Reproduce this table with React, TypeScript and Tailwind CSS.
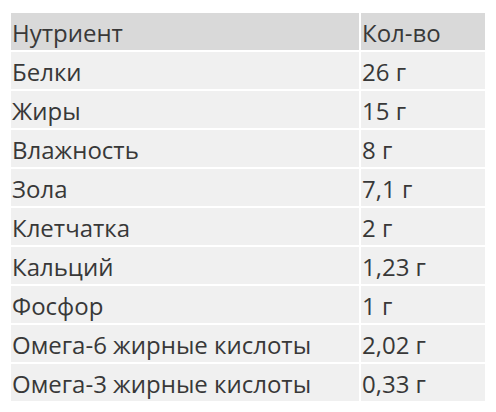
const rows: [string, string][] = [
  ["Белки", "26 г"],
  ["Жиры", "15 г"],
  ["Влажность", "8 г"],
  ["Зола", "7,1 г"],
  ["Клетчатка", "2 г"],
  ["Кальций", "1,23 г"],
  ["Фосфор", "1 г"],
  ["Омега-6 жирные кислоты", "2,02 г"],
  ["Омега-3 жирные кислоты", "0,33 г"],
];

export default function App() {
  return (
    <div className="w-[496px] h-[412px] bg-white pl-[11px] pt-[13px] font-['Open_Sans',sans-serif] text-[#383838]">
      <div className="grid grid-cols-[348px_124px] gap-[2px] text-[24px] leading-none">
        <div className="h-[37px] bg-[#d9d9d9] flex items-center pl-[1px] pt-[3px]">Нутриент</div>
        <div className="h-[37px] bg-[#d9d9d9] flex items-center pl-[1px] pt-[3px]">Кол-во</div>
        {rows.map(([name, amount]) => (
          <>
            <div key={name} className="h-[37px] bg-[#f0f0f0] flex items-center pl-[1px] pt-[3px]">
              {name}
            </div>
            <div key={name + "-v"} className="h-[37px] bg-[#f0f0f0] flex items-center pl-[1px] pt-[3px]">
              {amount}
            </div>
          </>
        ))}
      </div>
    </div>
  );
}
